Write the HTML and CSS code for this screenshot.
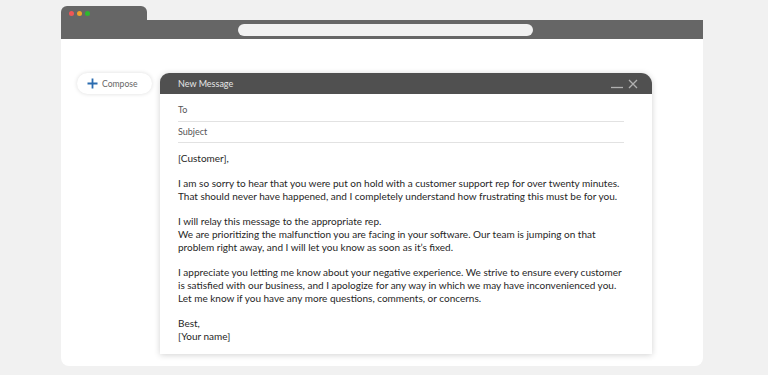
FILE: index.html
```html
<!DOCTYPE html>
<html>
<head>
<meta charset="utf-8">
<link rel="stylesheet" href="styles.css">
</head>
<body>
<div class="frame">
  <div class="tab">
    <span class="dot red"></span><span class="dot orange"></span><span class="dot green"></span>
  </div>
  <div class="toolbar"><div class="address"></div></div>
  <div class="content">
    <div class="compose">
      <svg class="plus" width="11" height="11" viewBox="0 0 11 11"><path d="M5.5 0.5v10M0.5 5.5h10" stroke="#2b6cb0" stroke-width="1.8" fill="none"/></svg>
      <span>Compose</span>
    </div>
    <div class="window">
      <div class="header">
        <span class="title">New Message</span>
        <div class="controls">
          <svg width="13" height="10" viewBox="0 0 13 10"><path d="M0 8.5h12" stroke="#b0b0b0" stroke-width="1.3"/></svg>
          <svg width="10" height="10" viewBox="0 0 10 10"><path d="M1 1l8 8M9 1l-8 8" stroke="#b0b0b0" stroke-width="1.3"/></svg>
        </div>
      </div>
      <div class="fields">
        <div class="field to">To</div>
        <div class="field subject">Subject</div>
      </div>
      <div class="body">
        <p>[Customer],</p>
        <p>I am so sorry to hear that you were put on hold with a customer support rep for over twenty minutes.<br>That should never have happened, and I completely understand how frustrating this must be for you.</p>
        <p>I will relay this message to the appropriate rep.<br>We are prioritizing the malfunction you are facing in your software. Our team is jumping on that<br>problem right away, and I will let you know as soon as it’s fixed.</p>
        <p>I appreciate you letting me know about your negative experience. We strive to ensure every customer<br>is satisfied with our business, and I apologize for any way in which we may have inconvenienced you.<br>Let me know if you have any more questions, comments, or concerns.</p>
        <p>Best,<br>[Your name]</p>
      </div>
    </div>
  </div>
</div>
</body>
</html>
```
FILE: styles.css
```css
html, body {
  margin: 0;
  padding: 0;
  background: #f1f1f1;
  font-family: "Lato", "Liberation Sans", sans-serif;
}
.frame {
  margin-left: 61px;
  width: 642px;
  padding-top: 6px;
}
.tab {
  width: 86px;
  height: 14px;
  background: #666666;
  border-radius: 6px 6px 0 0;
  display: flex;
  align-items: center;
  gap: 3px;
  padding-left: 8px;
  box-sizing: border-box;
}
.dot {
  width: 5px;
  height: 5px;
  border-radius: 50%;
}
.red { background: #f05656; }
.orange { background: #f0a22c; }
.green { background: #2eb82e; }
.toolbar {
  height: 19px;
  background: #666666;
  display: flex;
  align-items: center;
  padding-left: 177px;
}
.address {
  width: 295px;
  height: 12px;
  background: #f1f1f1;
  border-radius: 6px;
}
.content {
  background: #ffffff;
  height: 327px;
  border-radius: 0 0 8px 8px;
  display: flex;
  align-items: flex-start;
  padding-top: 34px;
  box-sizing: border-box;
}
.compose {
  margin-left: 16px;
  width: 75px;
  height: 21px;
  border-radius: 11px;
  background: #fff;
  box-shadow: 0 0 4px rgba(0,0,0,0.14);
  display: flex;
  align-items: center;
  box-sizing: border-box;
  padding-left: 10px;
  gap: 4px;
  font-size: 8.6px;
  color: #666;
}
.window {
  margin-left: 8px;
  width: 492px;
  background: #fff;
  box-shadow: 0 1px 6px rgba(0,0,0,0.18);
  border-radius: 9px 11px 0 0;
}
.header {
  height: 21px;
  background: #505050;
  border-radius: 9px 11px 0 0;
  display: flex;
  align-items: center;
  justify-content: space-between;
  padding: 0 14px 0 18px;
}
.title {
  color: #e6e6e6;
  font-size: 9px;
}
.controls {
  display: flex;
  align-items: center;
  gap: 4px;
}
.fields {
  margin: 0 28px 0 18px;
}
.field {
  font-size: 9px;
  color: #555;
  border-bottom: 1px solid #e2e2e2;
  box-sizing: border-box;
  display: flex;
  align-items: flex-end;
}
.to {
  height: 28px;
  padding-bottom: 6px;
}
.subject {
  height: 21px;
  padding-bottom: 5px;
}
.body {
  padding: 9px 18px 12px 18px;
  font-size: 10px;
  line-height: 12.7px;
  color: #262626;
  white-space: nowrap;
}
.body p {
  margin: 0 0 12.7px 0;
}
.body p:last-child {
  margin-bottom: 0;
}
```
